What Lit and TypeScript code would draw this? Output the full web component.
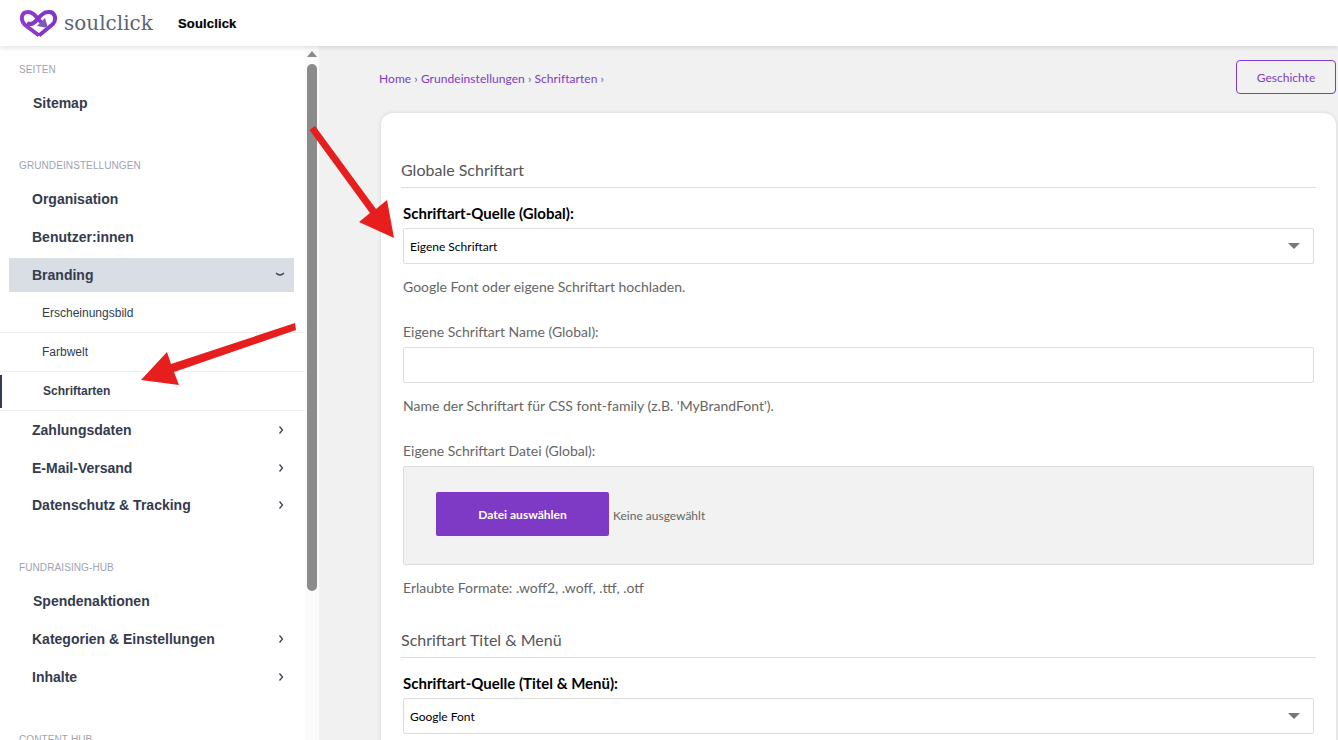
import { LitElement, html, css, svg } from "lit";
import { customElement } from "lit/decorators.js";

const chevR = html`<svg class="chev" width="8" height="10" viewBox="0 0 8 10"><path d="M2.5 1.5 L5.5 5 L2.5 8.5" fill="none" stroke="#3a4256" stroke-width="1.3"/></svg>`;
const chevD = html`<svg class="chev" width="10" height="8" viewBox="0 0 10 8"><path d="M1 2 Q5 6 9 2" fill="none" stroke="#3a4256" stroke-width="1.2"/></svg>`;

@customElement("app-root")
export class AppRoot extends LitElement {
  static styles = css`
    :host { display: block; width: 1338px; height: 740px; overflow: hidden; position: relative; background: #f1f1f1; font-family: "Liberation Sans", Arial, sans-serif; }
    .top { height: 46px; background: #fff; box-shadow: 0 1px 6px rgba(0,0,0,.14); display: flex; align-items: center; position: relative; z-index: 2; padding-left: 20px; }
    .logo { display: block; }
    .word { font-family: "DejaVu Serif", serif; font-size: 20px; color: #5b6478; margin-left: 6px; width: 97px; font-weight: 400; }
    .org { font-weight: 700; font-size: 13px; letter-spacing: .15px; color: #000; margin-left: 17px; -webkit-text-stroke: .2px #000; }
    .body { display: flex; height: 694px; overflow: hidden; }
    .side { width: 305px; background: #fff; flex: none; padding-top: 14px; overflow: hidden; }
    .sec { height: 20px; line-height: 20px; font-size: 10px; letter-spacing: .1px; color: #9ea3b1; padding-left: 19px; margin-bottom: 4px; }
    .sec.gap { margin-top: 34px; }
    .item { height: 38px; display: flex; align-items: center; justify-content: space-between; margin-left: 9px; width: 285px; padding: 0 9px 0 23px; box-sizing: border-box; font-weight: 700; font-size: 14px; color: #343b4f; }
    .item.first { padding-left: 24px; }
    .item.open { height: 34px; background: #d9dde4; margin-top: 2px; margin-bottom: 2px; }
    .item.mid { height: 37px; }
    .item.cut { height: 37.5px; }
    .sub { height: 39px; display: flex; align-items: center; box-sizing: border-box; padding: 0 0 1px 42px; font-size: 12px; color: #343b4f; border-bottom: 1px solid #eeeeee; }
    .sub.active { position: relative; padding-left: 43px; font-weight: 700; }
    .sub.active::before { content: ""; position: absolute; left: 0; top: 3px; bottom: 2px; width: 2px; background: #343b4f; }
    .bar { width: 14px; flex: none; background: #fafafa; display: flex; flex-direction: column; align-items: center; }
    .arrow { width: 0; height: 0; border-left: 5px solid transparent; border-right: 5px solid transparent; border-bottom: 6px solid #8b8b8b; margin-top: 5px; }
    .thumb { width: 10px; height: 527px; border-radius: 5px; background: #8b8b8b; margin-top: 7px; }
    .main { flex: 1; padding: 14px 2px 0 60px; min-width: 0; }
    .crumbrow { display: flex; justify-content: space-between; align-items: center; height: 34px; margin-bottom: 19px; }
    .crumbs { font-family: Lato, sans-serif; font-size: 12px; letter-spacing: .05px; color: #666; padding-top: 2px; }
    .crumbs a { color: #7e3bc7; }
    .hist { width: 100px; height: 34px; box-sizing: border-box; border: 1px solid #7e3bc7; border-radius: 4px; display: flex; align-items: center; justify-content: center; font-family: Lato, sans-serif; font-size: 12px; color: #7e3bc7; }
    .card { margin-left: 2px; background: #fff; border-radius: 12px 12px 0 0; box-shadow: 0 0 4px rgba(0,0,0,.12); padding: 45px 20px 0; height: 700px; font-family: Lato, sans-serif; color: #666; font-size: 14px; box-sizing: border-box; }
    h3 { margin: 0; font-weight: 400; font-size: 16px; line-height: 24px; color: #555; padding-bottom: 5px; border-bottom: 1px solid #ddd; }
    .field { padding: 0 2px; }
    .blabel { font-weight: 700; font-size: 15px; color: #000; margin-top: 15px; line-height: 20px; height: 20px; margin-bottom: 5px; }
    .select { height: 36px; box-sizing: border-box; border: 1px solid #ddd; border-radius: 2px; display: flex; align-items: center; justify-content: space-between; padding: 0 13px 0 6px; font-size: 12px; color: #000; background: #fff; }
    .caret { width: 0; height: 0; border-left: 6px solid transparent; border-right: 6px solid transparent; border-top: 6px solid #777; }
    .hint { line-height: 20px; margin-top: 13px; }
    .label { line-height: 20px; margin-top: 25px; margin-bottom: 5px; }
    .input { height: 36px; box-sizing: border-box; border: 1px solid #ddd; border-radius: 2px; background: #fff; }
    .file { height: 99px; box-sizing: border-box; border: 1px solid #ddd; border-radius: 2px; background: #f2f2f2; display: flex; align-items: center; padding-left: 32px; }
    .btn { width: 173px; height: 44px; background: #7e39c5; color: #fff; border-radius: 2px; font-weight: 700; font-size: 12px; display: flex; align-items: center; justify-content: center; margin-top: -3px; }
    .none { font-size: 12px; color: #666; margin-left: 4px; }
    h3.second { margin-top: 30px; }
    .overlay { position: absolute; left: 0; top: 0; pointer-events: none; z-index: 3; }
  `;

  private row(t: string, kind: "" | "r" = "r", cls = "") {
    return html`<div class="item ${cls}"><span>${t}</span>${kind === "r" ? chevR : ""}</div>`;
  }

  render() {
    return html`
      <div class="top">
        <svg class="logo" width="38" height="30" viewBox="0 0 38 30">
          <path d="M19 27.5 L5 17 C0 12 1 4 8 4 C13 4 16 8 18 11 L24 17" fill="none" stroke="#8f38c9" stroke-width="4" stroke-linejoin="round"/>
          <path d="M19 27.5 L33 16 C37 11 35 3 28 4 C23 4 19 9 16 13 C13 16 10 17 7 15" fill="none" stroke="#8436c6" stroke-width="4" stroke-linejoin="round"/>
          <path d="M25 10 L28 20 L17 18 Z" fill="#7a5bb5"/>
        </svg>
        <span class="word">soulclick</span>
        <span class="org">Soulclick</span>
      </div>
      <div class="body">
        <nav class="side">
          <div class="sec">SEITEN</div>
          ${this.row("Sitemap", "", "first")}
          <div class="sec gap">GRUNDEINSTELLUNGEN</div>
          ${this.row("Organisation", "")}
          ${this.row("Benutzer:innen", "")}
          <div class="item open"><span>Branding</span>${chevD}</div>
          <div class="sub">Erscheinungsbild</div>
          <div class="sub">Farbwelt</div>
          <div class="sub active">Schriftarten</div>
          ${this.row("Zahlungsdaten")}
          ${this.row("E-Mail-Versand", "r", "mid")}
          ${this.row("Datenschutz & Tracking", "r", "cut")}
          <div class="sec gap">FUNDRAISING-HUB</div>
          ${this.row("Spendenaktionen", "", "first")}
          ${this.row("Kategorien & Einstellungen")}
          ${this.row("Inhalte")}
          <div class="sec gap">CONTENT-HUB</div>
        </nav>
        <div class="bar"><div class="arrow"></div><div class="thumb"></div></div>
        <main class="main">
          <div class="crumbrow">
            <div class="crumbs"><a>Home</a> › <a>Grundeinstellungen</a> › <a>Schriftarten</a> ›</div>
            <div class="hist">Geschichte</div>
          </div>
          <section class="card">
            <h3>Globale Schriftart</h3>
            <div class="field">
              <div class="blabel">Schriftart-Quelle (Global):</div>
              <div class="select"><span>Eigene Schriftart</span><i class="caret"></i></div>
              <div class="hint">Google Font oder eigene Schriftart hochladen.</div>
              <div class="label">Eigene Schriftart Name (Global):</div>
              <div class="input"></div>
              <div class="hint">Name der Schriftart für CSS font-family (z.B. 'MyBrandFont').</div>
              <div class="label">Eigene Schriftart Datei (Global):</div>
              <div class="file"><div class="btn">Datei auswählen</div><span class="none">Keine ausgewählt</span></div>
              <div class="hint">Erlaubte Formate: .woff2, .woff, .ttf, .otf</div>
            </div>
            <h3 class="second">Schriftart Titel &amp; Menü</h3>
            <div class="field">
              <div class="blabel">Schriftart-Quelle (Titel &amp; Menü):</div>
              <div class="select"><span>Google Font</span><i class="caret"></i></div>
            </div>
          </section>
        </main>
      </div>
      <svg class="overlay" width="1338" height="740" viewBox="0 0 1338 740">
        ${svg`<path d="M315 126 L376 209 L387 200 L394 238 L359 222 L370 213 L309.5 130 Z" fill="#e61e1e"/>
        <path d="M295 323 L296 330 L174 372 L179 385 L141 380 L167 352 L171 364 Z" fill="#e61e1e"/>`}
      </svg>
    `;
  }
}
